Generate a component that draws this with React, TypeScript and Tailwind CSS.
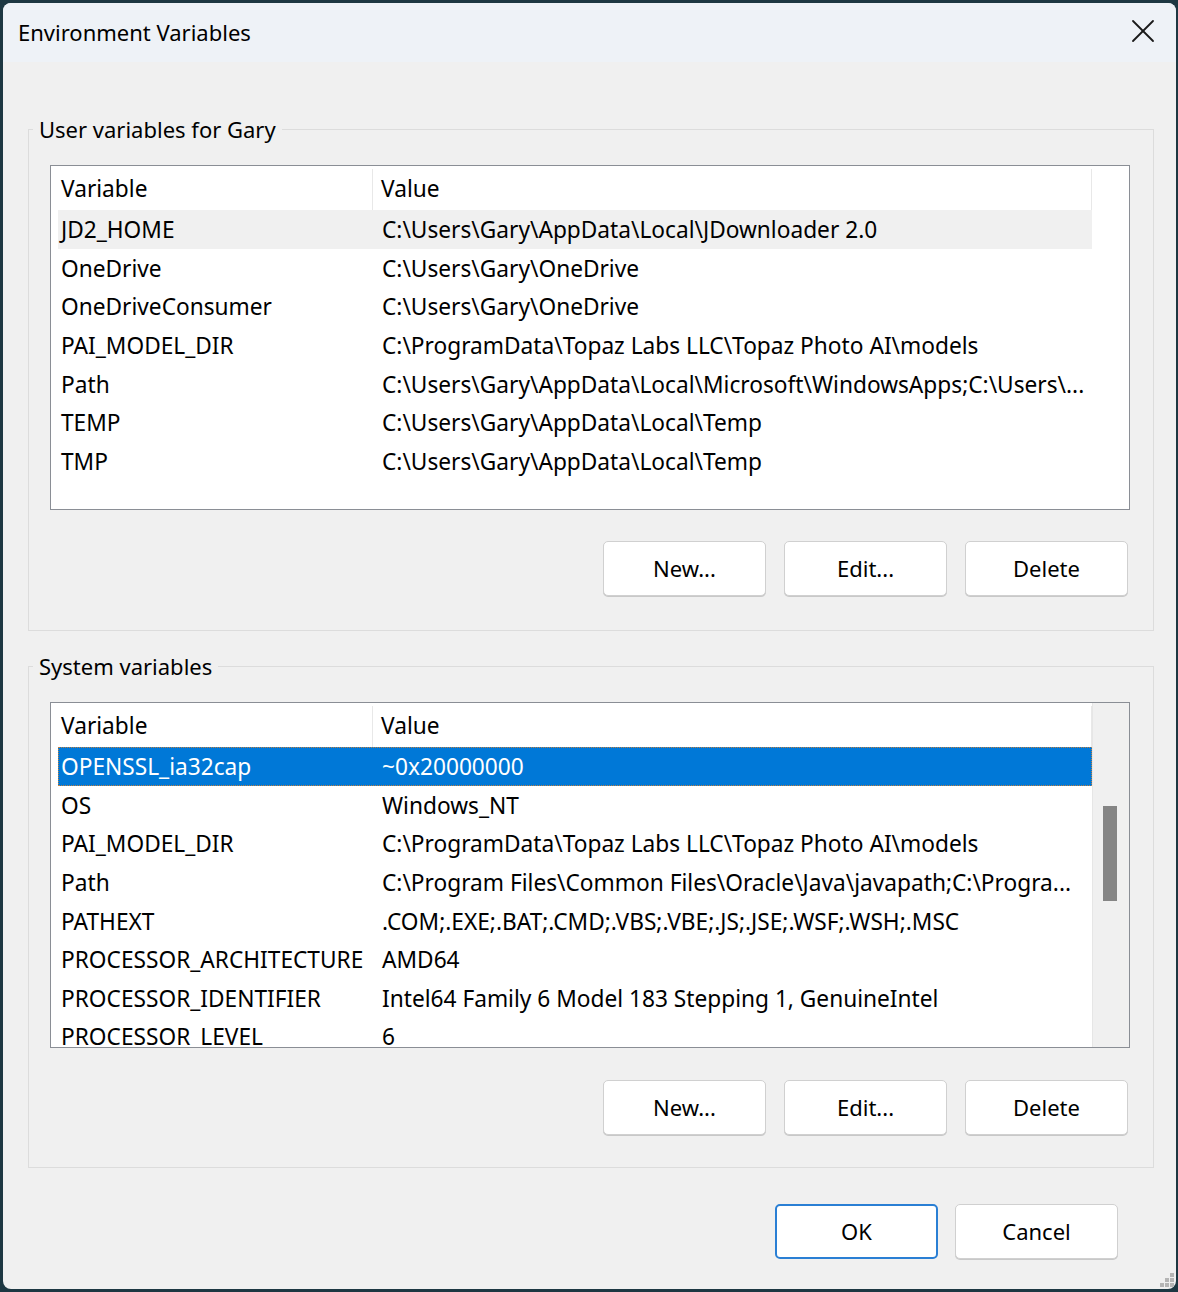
import { X } from 'lucide-react';

type Row = [string, string];

const userRows: Row[] = [
  ['JD2_HOME', 'C:\\Users\\Gary\\AppData\\Local\\JDownloader 2.0'],
  ['OneDrive', 'C:\\Users\\Gary\\OneDrive'],
  ['OneDriveConsumer', 'C:\\Users\\Gary\\OneDrive'],
  ['PAI_MODEL_DIR', 'C:\\ProgramData\\Topaz Labs LLC\\Topaz Photo AI\\models'],
  ['Path', 'C:\\Users\\Gary\\AppData\\Local\\Microsoft\\WindowsApps;C:\\Users\\...'],
  ['TEMP', 'C:\\Users\\Gary\\AppData\\Local\\Temp'],
  ['TMP', 'C:\\Users\\Gary\\AppData\\Local\\Temp'],
];

const systemRows: Row[] = [
  ['OPENSSL_ia32cap', '~0x20000000'],
  ['OS', 'Windows_NT'],
  ['PAI_MODEL_DIR', 'C:\\ProgramData\\Topaz Labs LLC\\Topaz Photo AI\\models'],
  ['Path', 'C:\\Program Files\\Common Files\\Oracle\\Java\\javapath;C:\\Progra...'],
  ['PATHEXT', '.COM;.EXE;.BAT;.CMD;.VBS;.VBE;.JS;.JSE;.WSF;.WSH;.MSC'],
  ['PROCESSOR_ARCHITECTURE', 'AMD64'],
  ['PROCESSOR_IDENTIFIER', 'Intel64 Family 6 Model 183 Stepping 1, GenuineIntel'],
  ['PROCESSOR_LEVEL', '6'],
];

const Button = ({ label, primary }: { label: string; primary?: boolean }) => (
  <button
    className={
      'w-[163px] h-[55px] bg-white rounded-[5px] text-[22px] text-black ' +
      (primary ? 'border-2 border-[#2a7fd4]' : 'border border-[#d0d0d0] shadow-[0_1px_0_#c8c8c8]')
    }
  >
    {label}
  </button>
);

const VarList = ({ rows, blue, scroll, h }: { rows: Row[]; blue?: boolean; scroll?: boolean; h: string }) => (
  <div className={'relative ml-[21px] w-[1080px] border border-[#8a8e95] bg-white overflow-hidden flex ' + h}>
    <div className="w-[1041px] flex flex-col">
      <div className="flex h-[44px] shrink-0 pt-[3px] text-[22.7px] text-black">
        <div className="w-[322px] pl-[10px] flex items-center border-r border-[#e8e8e8]">Variable</div>
        <div className="flex-1 pl-[8px] flex items-center border-r border-[#e8e8e8]">Value</div>
      </div>
      {rows.map(([name, value], i) => {
        const sel = i === 0;
        const cls = sel
          ? blue
            ? 'bg-[#0078d7] text-white outline-1 outline-dotted outline-[#c08040] -outline-offset-1'
            : 'bg-[#f0f0f0] text-black'
          : 'text-black';
        return (
          <div key={name} className={'ml-[7px] w-[1034px] h-[38.6px] shrink-0 pt-[2px] flex items-center text-[22.7px] whitespace-nowrap ' + cls}>
            <div className="w-[315px] pl-[3px]">{name}</div>
            <div className="pl-[9px]">{value}</div>
          </div>
        );
      })}
    </div>
    {scroll && (
      <div className="ml-auto w-[37px] h-full bg-[#f0f0f0] border-l border-[#e6e6e6] pl-[10px]">
        <div className="mt-[103px] w-[14px] h-[95px] bg-[#858585]" />
      </div>
    )}
  </div>
);

const Group = ({
  title,
  rows,
  blue,
  scroll,
  mt,
  h,
  btns,
}: {
  title: string;
  rows: Row[];
  blue?: boolean;
  scroll?: boolean;
  mt: string;
  h: string;
  btns: string;
}) => (
  <fieldset className={'ml-[25px] w-[1126px] border border-[#dcdcdc] ' + mt}>
    <legend className="ml-[4px] px-[6px] text-[22px] leading-[30px] text-black">{title}</legend>
    <div className="mt-[21px]">
      <VarList rows={rows} blue={blue} scroll={scroll} h={h} />
    </div>
    <div className={'flex justify-end gap-[18px] mr-[25px] ' + btns}>
      <Button label="New..." />
      <Button label="Edit..." />
      <Button label="Delete" />
    </div>
  </fieldset>
);

export default function App() {
  return (
    <div className="w-[1178px] h-[1292px] bg-[#1d3742] pt-[3px] pl-[3px] font-['Noto_Sans',sans-serif]">
      <div className="w-[1173px] h-[1286px] rounded-[8px] overflow-hidden bg-[#f0f0f0] flex flex-col">
        <div className="h-[59px] shrink-0 bg-[#eef2f7] flex items-center pl-[15px] pr-[13px]">
          <span className="text-[22px] text-black">Environment Variables</span>
          <X className="ml-auto w-[40px] h-[40px] -mt-[3px] text-[#1a1a1a]" strokeWidth={1.1} />
        </div>
        <Group
          title="User variables for Gary"
          rows={userRows}
          mt="mt-[52px]"
          h="h-[345px]"
          btns="mt-[31px] mb-[34px]"
        />
        <Group
          title="System variables"
          rows={systemRows}
          blue
          scroll
          mt="mt-[20px]"
          h="h-[346px]"
          btns="mt-[32px] mb-[32px]"
        />
        <div className="flex justify-end gap-[17px] mr-[58px] mt-[36px]">
          <Button label="OK" primary />
          <Button label="Cancel" />
        </div>
        <div className="mt-auto self-end mr-[2px] mb-[2px] grid grid-cols-3 gap-[1px] w-[14px]">
          <span />
          <span />
          <span className="w-[4px] h-[4px] bg-[#b5b5b5]" />
          <span />
          <span className="w-[4px] h-[4px] bg-[#b5b5b5]" />
          <span className="w-[4px] h-[4px] bg-[#b5b5b5]" />
          <span className="w-[4px] h-[4px] bg-[#b5b5b5]" />
          <span className="w-[4px] h-[4px] bg-[#b5b5b5]" />
          <span className="w-[4px] h-[4px] bg-[#b5b5b5]" />
        </div>
      </div>
    </div>
  );
}
